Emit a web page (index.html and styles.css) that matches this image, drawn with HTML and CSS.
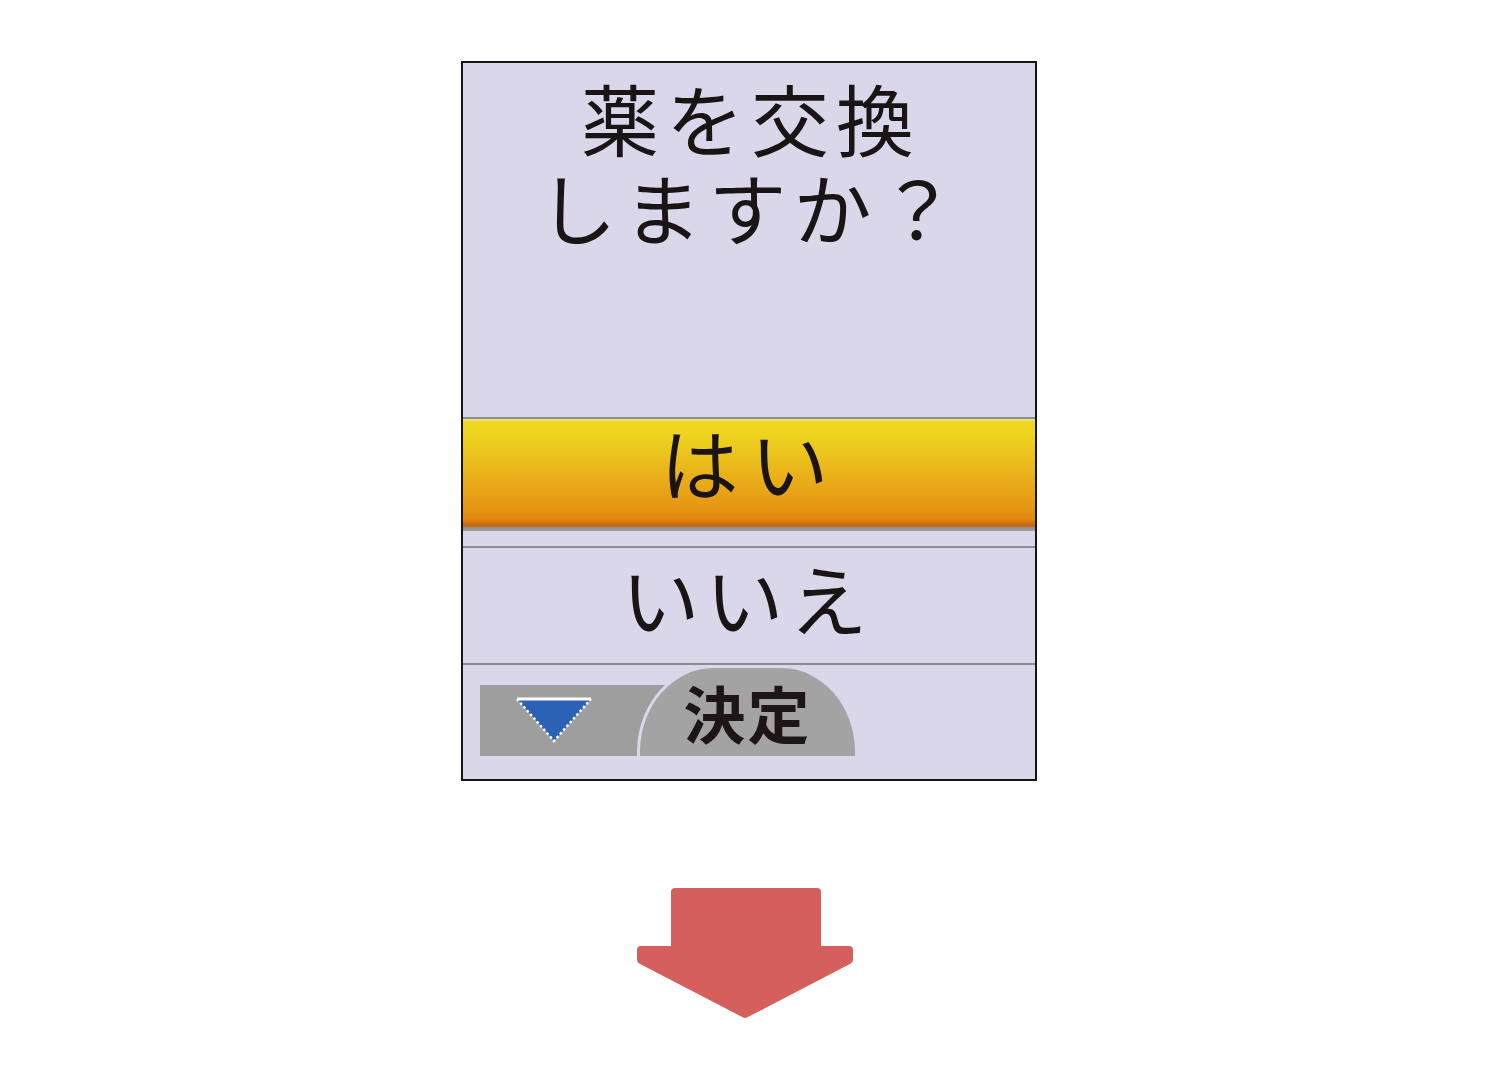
FILE: index.html
```html
<!DOCTYPE html>
<html lang="ja">
<head>
<meta charset="utf-8">
<link rel="stylesheet" href="styles.css">
</head>
<body>
<div class="screen">
  <div class="title"><div class="line">薬を交換</div><div class="line">しますか？</div></div>
  <div class="sep"></div>
  <div class="yes">はい</div>
  <div class="gap"></div>
  <div class="sep"></div>
  <div class="no">いいえ</div>
  <div class="sep"></div>
  <div class="controls">
    <div class="down-key">
      <svg class="tri" width="80" height="50" viewBox="0 0 80 50">
        <polygon points="3,3 77,3 40,45" fill="#2b62b6"/>
        <line x1="3" y1="3" x2="77" y2="3" stroke="#fff" stroke-width="3"/>
        <polyline points="3,3 40,45 77,3" fill="none" stroke="#fff" stroke-width="2.5" stroke-dasharray="2.5 2.5"/>
      </svg>
    </div>
    <div class="ok-key">決定</div>
  </div>
</div>
<div class="arrow-wrap">
  <svg class="arrow" width="220" height="136" viewBox="0 0 220 136">
    <polygon points="40,6 182,6 182,64 214,64 214,74 110,128 6,74 6,64 40,64" fill="#d45f5c" stroke="#d45f5c" stroke-width="8" stroke-linejoin="round"/>
  </svg>
</div>
</body>
</html>
```
FILE: styles.css
```css
html, body {
  margin: 0;
  padding: 0;
  background: #ffffff;
}
body {
  font-family: "Noto Sans CJK JP", "Noto Sans", sans-serif;
  color: #1a1414;
}
.screen {
  width: 572px;
  height: 716px;
  margin: 61px 0 0 461px;
  border: 2px solid #151515;
  background: #d9d7e9;
  display: flex;
  flex-direction: column;
}
.title {
  height: 344px;
  padding: 10px 0 0 4px;
  font-size: 78px;
  letter-spacing: 7px;
  text-align: center;
}
.line {
  height: 89px;
  line-height: 89px;
}
.sep {
  height: 2px;
  background: #8c8b94;
  flex-shrink: 0;
}
.yes {
  height: 112px;
  line-height: 84px;
  font-size: 78px;
  letter-spacing: 12px;
  text-indent: 3px;
  text-align: center;
  flex-shrink: 0;
  background: linear-gradient(to bottom,
    #ece6a0 0px, #efd91f 3px, #eed41f 16px, #ebc21c 36px, #e9ae19 60px,
    #e79a15 84px, #e3880f 100px, #cf6c0c 105px, #b86a1c 107px, #9a8f8c 109px, #a09fa8 112px);
}
.gap {
  height: 15px;
  flex-shrink: 0;
}
.no {
  height: 115px;
  line-height: 98px;
  font-size: 78px;
  letter-spacing: 6px;
  text-indent: -3px;
  text-align: center;
  flex-shrink: 0;
}
.controls {
  flex: 1;
  display: flex;
  align-items: flex-end;
  padding: 0 0 23px 17px;
}
.down-key {
  width: 210px;
  height: 71px;
  background: #9e9e9e;
  flex-shrink: 0;
}
.tri {
  display: block;
  margin: 11px 0 0 34px;
}
.ok-key {
  width: 215px;
  height: 84px;
  margin-left: -53px;
  border: 3px solid #d9d7e9;
  border-bottom: 0;
  border-radius: 77px 77px 0 0 / 87px 87px 0 0;
  background: #a3a3a3;
  font-size: 62px;
  font-weight: 700;
  line-height: 80px;
  padding-top: 4px;
  box-sizing: content-box;
  text-align: center;
  letter-spacing: 2px;
  color: #1e1616;
  position: relative;
}
.arrow-wrap {
  padding: 105px 0 0 635px;
}
.arrow {
  display: block;
}
```
